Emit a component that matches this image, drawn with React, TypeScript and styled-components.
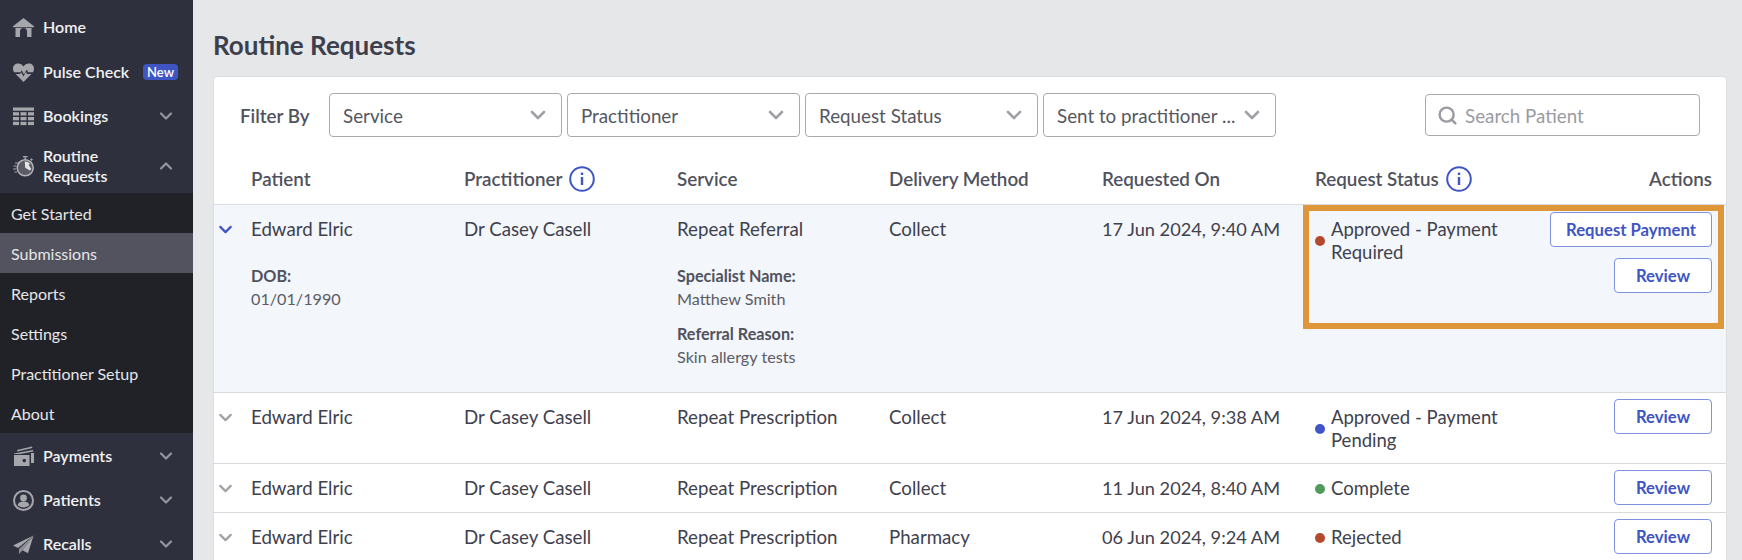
import React from "react";
import styled, { createGlobalStyle } from "styled-components";
import { ChevronDown, ChevronUp, Search } from "lucide-react";

const Global = createGlobalStyle`
  html, body { margin: 0; padding: 0; height: 560px; overflow: hidden; background: #e6e7e9; }
  body { font-family: Lato, "Noto Sans", sans-serif; color: #3f414d; }
  * { box-sizing: border-box; }
`;

const Page = styled.div`
  display: flex;
  width: 1742px;
  height: 560px;
  overflow: hidden;
`;

const Sidebar = styled.nav`
  flex: 0 0 193px;
  background: #2e303d;
  padding-top: 5px;
  color: #f1f1f3;
`;

const NavItem = styled.div<{ $tall?: boolean }>`
  display: flex;
  align-items: center;
  height: ${(p) => (p.$tall ? 56 : 44)}px;
  padding: 2px 13px 0;
  gap: 9px;
  font-size: 16px;
  font-weight: 600;
  line-height: 20px;

  &:first-child {
    padding-top: 0;
  }
`;

const NavIcon = styled.svg`
  flex: 0 0 21px;
  width: 21px;
  height: 21px;
  fill: #a6a7ac;
`;

const NavLabel = styled.span`
  flex: 1;
`;

const NavChevron = styled.span`
  display: flex;
  color: #96979e;
  margin-right: 4px;
`;

const NewBadge = styled.span`
  background: #3f55c4;
  color: #fff;
  font-size: 13px;
  font-weight: 600;
  line-height: 16px;
  padding: 0 4px;
  border-radius: 4px;
  margin-right: 2px;
`;

const SubMenu = styled.div`
  background: #212228;
`;

const SubItem = styled.div<{ $active?: boolean }>`
  height: 40px;
  display: flex;
  align-items: center;
  padding-left: 11px;
  font-size: 16px;
  color: #e6e6e8;
  background: ${(p) => (p.$active ? "#52535e" : "transparent")};
`;

const Main = styled.main`
  flex: 1;
  min-width: 0;
  padding: 28px 15px 0 20px;
`;

const Title = styled.h1`
  margin: 0 0 14px;
  font-size: 26px;
  line-height: 34px;
  font-weight: 700;
  color: #3d404c;
`;

const Card = styled.section`
  background: #fff;
  border: 1px solid #dcdde1;
  border-radius: 4px 4px 0 0;
`;

const Toolbar = styled.div`
  display: flex;
  align-items: center;
  padding: 16px 26px 0 26px;
  height: 60px;
`;

const FilterLabel = styled.span`
  width: 89px;
  font-size: 18.8px;
  font-weight: 600;
  color: #50525e;
`;

const Selects = styled.div`
  display: flex;
  gap: 5px;
`;

const Select = styled.div`
  width: 233px;
  height: 44px;
  display: flex;
  align-items: center;
  justify-content: space-between;
  padding: 0 11px 0 13px;
  border: 1px solid #a9aab0;
  border-radius: 4px;
  font-size: 18.8px;
  color: #55575f;
`;

const SelectChevron = styled(ChevronDown)`
  color: #a0a1a6;
`;

const SearchBox = styled.div`
  margin-left: auto;
  width: 275px;
  height: 42px;
  display: flex;
  align-items: center;
  gap: 7px;
  padding-left: 11px;
  border: 1px solid #a9aab0;
  border-radius: 4px;
  font-size: 18.8px;
  color: #9a9ba3;
`;

const Grid = styled.div`
  display: grid;
  grid-template-columns: 37px 213px 213px 212px 213px 213px 215px 1fr;
  align-items: start;
`;

const HeaderRow = styled(Grid)`
  height: 68px;
  padding-top: 30px;
  border-bottom: 1px solid #dcdde1;
  font-size: 18.8px;
  font-weight: 600;
  line-height: 23px;
  color: #50525e;
`;

const HeaderCell = styled.div<{ $end?: boolean }>`
  display: flex;
  align-items: center;
  gap: 7px;
  justify-content: ${(p) => (p.$end ? "flex-end" : "flex-start")};
  padding-right: ${(p) => (p.$end ? 14 : 0)}px;
`;

const InfoIcon = styled.svg`
  width: 26px;
  height: 26px;
  margin: -2px 0;
  fill: none;
  stroke: #3f55c4;
  stroke-width: 2;
`;

const Row = styled(Grid)<{ $open?: boolean }>`
  position: relative;
  min-height: ${(p) => (p.$open ? 188 : 0)}px;
  padding: 6px 0 7px;
  background: ${(p) => (p.$open ? "#f3f6fb" : "#fff")};
  border-bottom: 1px solid #d9dade;
  font-size: 18.7px;
  line-height: 23px;
`;

const Toggle = styled.div<{ $open?: boolean }>`
  display: flex;
  padding-top: 8px;
  margin-left: 1px;
  color: ${(p) => (p.$open ? "#3f55c4" : "#a0a1a6")};
`;

const Cell = styled.div<{ $compact?: boolean }>`
  padding: 7px 0 4px;
  font-size: ${(p) => (p.$compact ? "18.2px" : "inherit")};
`;

const Detail = styled.div`
  margin-top: 12px;
  font-size: 16.2px;
  line-height: 23px;
  color: #5a5c66;

  &:first-of-type {
    margin-top: 23px;
  }

  strong {
    display: block;
    font-weight: 700;
    color: #50525e;
  }
`;

const StatusCell = styled(Cell)`
  display: flex;
  align-items: center;
  gap: 6px;
  font-size: 18.5px;
`;

const Dot = styled.span<{ $color: string }>`
  flex: 0 0 10px;
  width: 10px;
  height: 10px;
  border-radius: 50%;
  background: ${(p) => p.$color};
`;

const Actions = styled.div<{ $open?: boolean }>`
  display: flex;
  flex-direction: column;
  align-items: flex-end;
  gap: 11px;
  padding: ${(p) => (p.$open ? 1 : 0)}px 14px 0 0;
`;

const ActionButton = styled.button`
  min-width: 98px;
  height: 35px;
  padding: 0 15px;
  background: #fff;
  border: 1px solid #7d92e2;
  border-radius: 4px;
  color: #3f55c4;
  font-family: inherit;
  font-size: 16.7px;
  font-weight: 700;
`;

const Highlight = styled.div`
  position: absolute;
  top: 0;
  right: 2px;
  width: 421px;
  height: 124px;
  border: 6px solid #df9638;
  pointer-events: none;
`;

const Info = () => (
  <InfoIcon viewBox="0 0 26 26">
    <circle cx="13" cy="13" r="11.8" />
    <path d="M13 11v8" strokeWidth="2.4" />
    <path d="M13 6.6v2.4" strokeWidth="2.4" />
  </InfoIcon>
);

const HomeIcon = () => (
  <NavIcon viewBox="0 0 21 21">
    <path d="M10.5 1 21 9.2v1H0v-1z" />
    <path fillRule="evenodd" d="M2.500 11h16v9h-16zM7 20h7v-5.500a3.500 3.500 0 0 0-7 0z" />
  </NavIcon>
);

const HeartIcon = () => (
  <NavIcon viewBox="0 0 21 21">
    <path d="M1 10.200C.2 9 0 7.800 0 6.600 0 3.600 2.300 1.500 5 1.500c2.300 0 4.300 1.100 5.500 3 1.200-1.900 3.200-3 5.500-3 2.700 0 5 2.100 5 5.100 0 1.200-.2 2.400-1 3.600h-4.800l-1.500-2.700-2.700 5-2.400-4.300-1 2z" />
    <path d="M2.600 12h4.500l1-1.800 2.400 4.200 2.700-5 .6 2.600h4.600L10.500 20z" />
  </NavIcon>
);

const TableIcon = () => (
  <NavIcon viewBox="0 0 21 21">
    <rect x="0" y="1.500" width="21" height="3.200" />
    <rect x="0" y="6.200" width="6" height="3.300" />
    <rect x="7.500" y="6.200" width="6" height="3.300" />
    <rect x="15" y="6.200" width="6" height="3.300" />
    <rect x="0" y="11" width="6" height="3.300" />
    <rect x="7.500" y="11" width="6" height="3.300" />
    <rect x="15" y="11" width="6" height="3.300" />
    <rect x="0" y="15.800" width="6" height="3.300" />
    <rect x="7.500" y="15.800" width="6" height="3.300" />
    <rect x="15" y="15.800" width="6" height="3.300" />
  </NavIcon>
);

const TimerIcon = () => (
  <NavIcon viewBox="0 0 21 21">
    <rect x="10" y="0" width="4.500" height="1.400" />
    <rect x="11.500" y="1.400" width="1.500" height="1.800" />
    <rect x="17.500" y="2.600" width="2" height="2" transform="rotate(45 18.500 3.600)" />
    <circle cx="12.200" cy="11.800" r="8" fill="#5a5b64" stroke="#b4b5ba" strokeWidth="1.500" />
    <path fill="#e4e4e7" d="M12.200 11.800 11.800 5.400a6.500 6.500 0 0 1 5.200 2.400l-1.300 1.100 2.600 4.200-1.500 1.300z" />
    <path d="M2 6.500h3.500v1H2zM.5 9.500h3v1h-3zM0 12.500h3v1H0zM1.500 15.500h2.500v1H1.500z" />
  </NavIcon>
);

const CardIcon = () => (
  <NavIcon viewBox="0 0 21 21">
    <path d="M4 4 19 .5l.4 1.400L4.400 5.400z" />
    <path d="M1 7.500 20 4l.4 1.500L7 8H1z" />
    <path fillRule="evenodd" d="M1 9h15.500v11H1zM9.500 14.600a1.800 1.800 0 1 0 3.600 0 1.800 1.800 0 0 0-3.600 0z" />
    <path d="M18 7h3v10h-3z" />
  </NavIcon>
);

const PatientIcon = () => (
  <NavIcon viewBox="0 0 21 21">
    <path fillRule="evenodd" d="M10.500 0a10.500 10.500 0 1 1 0 21 10.500 10.500 0 0 1 0-21zm0 2a8.500 8.500 0 1 0 0 17 8.500 8.500 0 0 0 0-17z" />
    <circle cx="10.500" cy="8" r="3.400" />
    <path d="M4.500 15c.8-2.500 3-3.500 6-3.500s5.200 1 6 3.500c-1.500 1.600-3.700 2.500-6 2.500s-4.500-.9-6-2.500z" />
  </NavIcon>
);

const PlaneIcon = () => (
  <NavIcon viewBox="0 0 21 21">
    <path d="M20.500 1.500 0 11.500l5 2.500z" />
    <path d="M20.500 1.500 6 15v5l3.500-3.700z" opacity=".8" />
    <path d="M20.500 1.500 9.500 16.300l5.500 3z" />
  </NavIcon>
);

const RowToggle = ({ open }: { open?: boolean }) => (
  <Toggle $open={open}>
    <ChevronDown size={21} strokeWidth={2.5} />
  </Toggle>
);

const Down = () => (
  <NavChevron>
    <ChevronDown size={20} strokeWidth={2.6} />
  </NavChevron>
);

const filters = ["Service", "Practitioner", "Request Status", "Sent to practitioner ..."];
const subItems = ["Get Started", "Submissions", "Reports", "Settings", "Practitioner Setup", "About"];

const rows = [
  { service: "Repeat Prescription", method: "Collect", date: "17 Jun 2024, 9:38 AM", status: "Approved - Payment Pending", color: "#3f55c4" },
  { service: "Repeat Prescription", method: "Collect", date: "11 Jun 2024, 8:40 AM", status: "Complete", color: "#4f9a5c" },
  { service: "Repeat Prescription", method: "Pharmacy", date: "06 Jun 2024, 9:24 AM", status: "Rejected", color: "#b34a2c" },
];

export default function App() {
  return (
    <Page>
      <Global />
      <Sidebar>
        <NavItem><HomeIcon /><NavLabel>Home</NavLabel></NavItem>
        <NavItem><HeartIcon /><NavLabel>Pulse Check</NavLabel><NewBadge>New</NewBadge></NavItem>
        <NavItem><TableIcon /><NavLabel>Bookings</NavLabel><Down /></NavItem>
        <NavItem $tall>
          <TimerIcon />
          <NavLabel>Routine<br />Requests</NavLabel>
          <NavChevron><ChevronUp size={20} strokeWidth={2.6} /></NavChevron>
        </NavItem>
        <SubMenu>
          {subItems.map((s) => (
            <SubItem key={s} $active={s === "Submissions"}>{s}</SubItem>
          ))}
        </SubMenu>
        <NavItem><CardIcon /><NavLabel>Payments</NavLabel><Down /></NavItem>
        <NavItem><PatientIcon /><NavLabel>Patients</NavLabel><Down /></NavItem>
        <NavItem><PlaneIcon /><NavLabel>Recalls</NavLabel><Down /></NavItem>
      </Sidebar>
      <Main>
        <Title>Routine Requests</Title>
        <Card>
          <Toolbar>
            <FilterLabel>Filter By</FilterLabel>
            <Selects>
              {filters.map((f) => (
                <Select key={f}>
                  {f}
                  <SelectChevron size={24} strokeWidth={2.6} />
                </Select>
              ))}
            </Selects>
            <SearchBox>
              <Search size={21} strokeWidth={2.8} color="#9a9ba3" />
              Search Patient
            </SearchBox>
          </Toolbar>
          <HeaderRow>
            <div />
            <HeaderCell>Patient</HeaderCell>
            <HeaderCell>Practitioner <Info /></HeaderCell>
            <HeaderCell>Service</HeaderCell>
            <HeaderCell>Delivery Method</HeaderCell>
            <HeaderCell>Requested On</HeaderCell>
            <HeaderCell>Request Status <Info /></HeaderCell>
            <HeaderCell $end>Actions</HeaderCell>
          </HeaderRow>
          <Row $open>
            <RowToggle open />
            <Cell>
              Edward Elric
              <Detail><strong>DOB:</strong>01/01/1990</Detail>
            </Cell>
            <Cell>Dr Casey Casell</Cell>
            <Cell>
              Repeat Referral
              <Detail><strong>Specialist Name:</strong>Matthew Smith</Detail>
              <Detail><strong>Referral Reason:</strong>Skin allergy tests</Detail>
            </Cell>
            <Cell>Collect</Cell>
            <Cell $compact>17 Jun 2024, 9:40 AM</Cell>
            <StatusCell><Dot $color="#b34a2c" />Approved - Payment Required</StatusCell>
            <Actions $open>
              <ActionButton>Request Payment</ActionButton>
              <ActionButton>Review</ActionButton>
            </Actions>
            <Highlight />
          </Row>
          {rows.map((r) => (
            <Row key={r.date}>
              <RowToggle />
              <Cell>Edward Elric</Cell>
              <Cell>Dr Casey Casell</Cell>
              <Cell>{r.service}</Cell>
              <Cell>{r.method}</Cell>
              <Cell $compact>{r.date}</Cell>
              <StatusCell><Dot $color={r.color} />{r.status}</StatusCell>
              <Actions><ActionButton>Review</ActionButton></Actions>
            </Row>
          ))}
        </Card>
      </Main>
    </Page>
  );
}
